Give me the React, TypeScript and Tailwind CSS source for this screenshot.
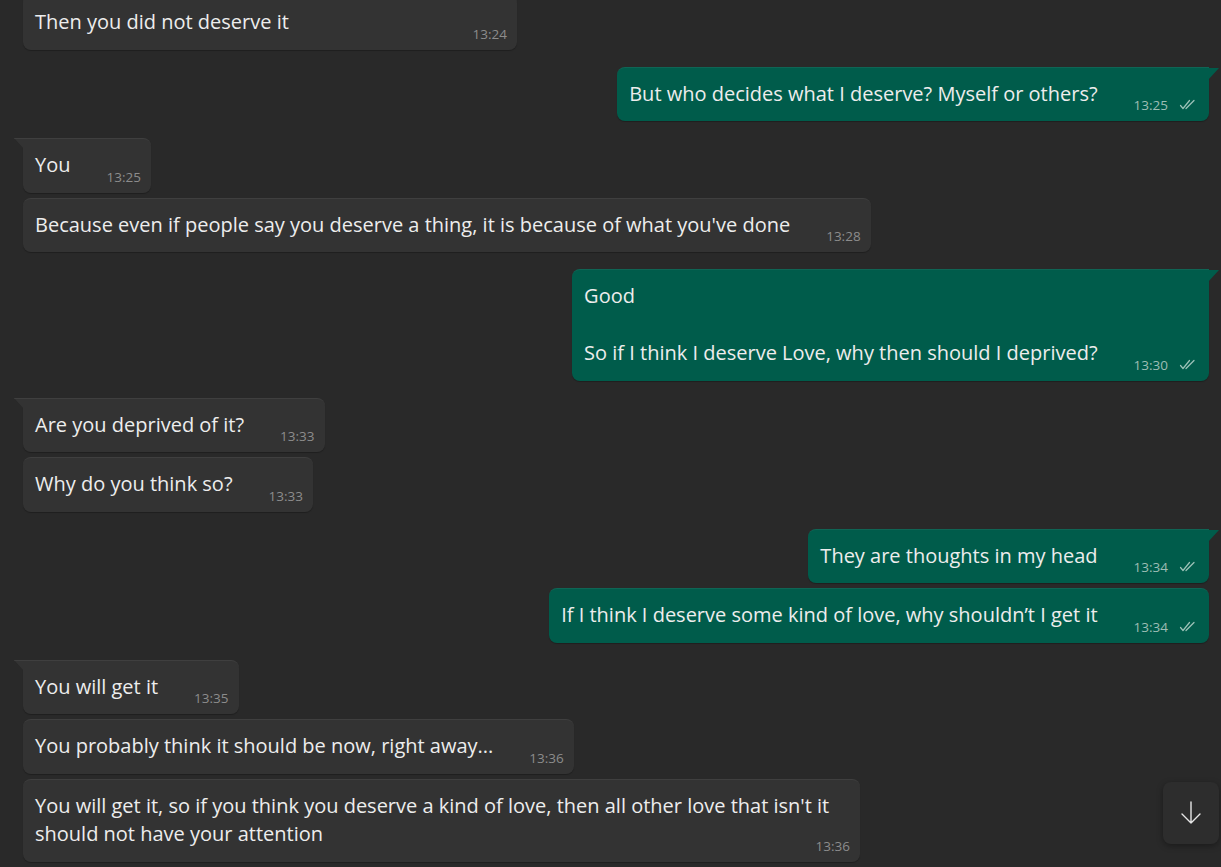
import React from "react";

type Msg = {
  id: number;
  out: boolean;
  text: string;
  time: string;
  first?: boolean;
  gap?: boolean;
  stacked?: boolean;
  wide?: string;
};

const messages: Msg[] = [
  { id: 1, out: false, text: "Then you did not deserve it", time: "13:24", wide: "w-[494px]" },
  { id: 2, out: true, text: "But who decides what I deserve? Myself or others?", time: "13:25", first: true, gap: true },
  { id: 3, out: false, text: "You", time: "13:25", first: true, gap: true },
  { id: 4, out: false, text: "Because even if people say you deserve a thing, it is because of what you've done", time: "13:28" },
  { id: 5, out: true, text: "Good\n\nSo if I think I deserve Love, why then should I deprived?", time: "13:30", first: true, gap: true },
  { id: 6, out: false, text: "Are you deprived of it?", time: "13:33", first: true, gap: true },
  { id: 7, out: false, text: "Why do you think so?", time: "13:33" },
  { id: 8, out: true, text: "They are thoughts in my head", time: "13:34", first: true, gap: true },
  { id: 9, out: true, text: "If I think I deserve some kind of love, why shouldn\u2019t I get it", time: "13:34" },
  { id: 10, out: false, text: "You will get it", time: "13:35", first: true, gap: true },
  { id: 11, out: false, text: "You probably think it should be now, right away...", time: "13:36" },
  {
    id: 12,
    out: false,
    text: "You will get it, so if you think you deserve a kind of love, then all other love that isn't it\nshould not have your attention",
    time: "13:36",
    stacked: true,
    wide: "w-[837px]",
  },
];

function Ticks() {
  return (
    <svg width="17" height="11" viewBox="0 0 17 11" fill="none" className="ml-[11px] mb-[1px]">
      <path d="M1.5 6.5 L4 9.5 L10.5 1.5" stroke="#9ec3b9" strokeWidth="1.2" strokeLinecap="round" strokeLinejoin="round" />
      <path d="M7 9.5 L15 1.5" stroke="#9ec3b9" strokeWidth="1.2" strokeLinecap="round" />
    </svg>
  );
}

function Bubble({ m }: { m: Msg }) {
  const bg = m.out ? "bg-[#005c4b]" : "bg-[#333333]";
  const corner = m.first ? (m.out ? "rounded-tr-none" : "rounded-tl-none") : "";
  const timeColor = m.out ? "text-[#9cbdb4]" : "text-[#8c8c8c]";
  const time = (
    <div className={`flex items-center text-[13.5px] leading-4 ${timeColor} translate-y-[5px] shrink-0`}>
      <span>{m.time}</span>
      {m.out && <Ticks />}
    </div>
  );

  return (
    <div className={`flex ${m.out ? "justify-end pr-3" : "justify-start pl-[23px]"} ${m.gap ? "mt-[17px]" : "mt-[5px]"}`}>
      <div
        className={`relative ${bg} ${corner} ${m.wide ?? ""} rounded-lg border-t border-white/[0.06] shadow-[0_1px_1px_rgba(0,0,0,0.25)] pl-3 ${
          m.out ? "pr-[13px]" : "pr-[10px]"
        } pt-[12px] pb-[13px] text-[20px] leading-[28.5px] text-[#ededed]`}
      >
        {m.first && !m.out && (
          <svg width="10" height="11" viewBox="0 0 10 11" className="absolute -left-[9px] -top-px">
            <path d="M0 0 H10 V11 Z" fill="#333333" />
            <path d="M0 0.5 H10" stroke="rgba(255,255,255,0.06)" />
          </svg>
        )}
        {m.first && m.out && (
          <svg width="11" height="12" viewBox="0 0 11 12" className="absolute -right-[10px] top-0">
            <path d="M0 0 H11 L0 12 Z" fill="#005c4b" />
          </svg>
        )}
        {m.stacked ? (
          <div className="flex flex-col">
            {m.text.split("\n").map((line, i) => (
              <div key={i} className="w-fit">
                {line}
              </div>
            ))}
            <div className="self-end -mt-[16px]">{time}</div>
          </div>
        ) : (
          <div className="flex items-end justify-between gap-[36px]">
            <div className="whitespace-pre-line">{m.text}</div>
            {time}
          </div>
        )}
      </div>
    </div>
  );
}

export default function App() {
  return (
    <div className="relative h-[867px] w-[1221px] overflow-hidden bg-[#292929] font-['Open_Sans',sans-serif]">
      <div className="-mt-[10px] flex flex-col">
        {messages.map((m) => (
          <Bubble key={m.id} m={m} />
        ))}
      </div>

      <button className="absolute left-[1163px] top-[782px] flex h-[62px] w-[56px] items-center justify-center rounded-lg bg-[#2d2d2d] shadow-[0_2px_6px_rgba(0,0,0,0.35)]">
        <svg width="22" height="24" viewBox="0 0 22 24" fill="none">
          <path d="M11 1 V22 M2 13 L11 22 L20 13" stroke="#e6e6e6" strokeWidth="1.4" strokeLinecap="round" strokeLinejoin="round" />
        </svg>
      </button>
    </div>
  );
}
